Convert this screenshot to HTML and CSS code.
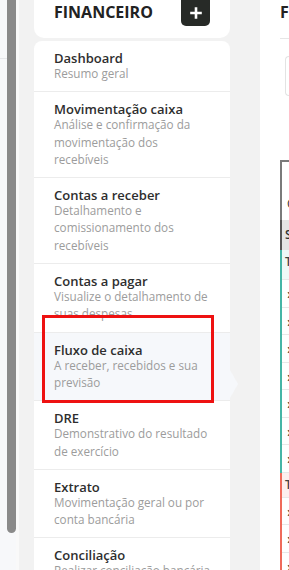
FILE: index.html
```html
<!DOCTYPE html>
<html lang="pt-BR">
<head>
    <meta charset="UTF-8">
    <meta name="viewport" content="width=device-width, initial-scale=1.0">
    <title>Financeiro</title>
    <link rel="stylesheet" href="styles.css">
</head>
<body>
    <div class="page">
        <aside class="rail">
            <div class="rail-line"></div>
        </aside>
        <div class="scroll"><div class="thumb"></div></div>
        <div class="edge"></div>

        <main class="main">
            <!-- menu financeiro -->
            <section class="fin">
                <header class="fin-head">
                    <h2 class="fin-title">FINANCEIRO</h2>
                    <button class="add" type="button">
                        <svg width="12" height="12" viewBox="0 0 12 12">
                            <path d="M6 1.5v9M1.5 6h9" stroke="#fff" stroke-width="2.6" stroke-linecap="square"/>
                        </svg>
                    </button>
                </header>

                <ul class="menu">
                    <li class="item">
                        <div class="item-title">Dashboard</div>
                        <div class="item-desc">Resumo geral</div>
                    </li>
                    <li class="item">
                        <div class="item-title">Movimentação caixa</div>
                        <div class="item-desc">Análise e confirmação da movimentação dos recebíveis</div>
                    </li>
                    <li class="item">
                        <div class="item-title">Contas a receber</div>
                        <div class="item-desc">Detalhamento e comissionamento dos recebíveis</div>
                    </li>
                    <li class="item">
                        <div class="item-title">Contas a pagar</div>
                        <div class="item-desc">Visualize o detalhamento de suas despesas</div>
                    </li>
                    <li class="item active">
                        <div class="item-title">Fluxo de caixa</div>
                        <div class="item-desc">A receber, recebidos e sua previsão</div>
                    </li>
                    <li class="item">
                        <div class="item-title">DRE</div>
                        <div class="item-desc">Demonstrativo do resultado de exercício</div>
                    </li>
                    <li class="item">
                        <div class="item-title">Extrato</div>
                        <div class="item-desc">Movimentação geral ou por conta bancária</div>
                    </li>
                    <li class="item">
                        <div class="item-title">Conciliação</div>
                        <div class="item-desc">Realizar conciliação bancária</div>
                    </li>
                </ul>
            </section>

            <!-- painel fluxo de caixa -->
            <section class="panel">
                <h2 class="panel-title">FLUXO DE CAIXA</h2>
                <div class="filter"></div>

                <div class="grid">
                    <div class="grid-cap">Categoria</div>
                    <div class="grid-head">Saldo</div>
                    <div class="group in">
                        <div class="row sum">Total entradas</div>
                        <div class="row">›</div>
                        <div class="row">›</div>
                        <div class="row">›</div>
                        <div class="row">›</div>
                        <div class="row">›</div>
                        <div class="row">›</div>
                        <div class="row">›</div>
                    </div>
                    <div class="group out">
                        <div class="row sum">Total saídas</div>
                        <div class="row">›</div>
                        <div class="row">›</div>
                        <div class="row">›</div>
                    </div>
                </div>
            </section>
        </main>

        <div class="mark"></div>
    </div>
</body>
</html>
```

FILE: styles.css
```css
/* página */
body {
    margin: 0;
    height: 570px;
    overflow: hidden;
    font-family: 'Open Sans', 'Liberation Sans', sans-serif;
    color: #333;
}

.page {
    display: flex;
    height: 570px;
    position: relative;
}

/* barra lateral à esquerda */
.rail {
    width: 7px;
    background-color: #f7f8fa;
    padding-top: 58px;
    box-sizing: border-box;
}

.rail-line {
    height: 1px;
    background-color: #e6e7ea;
}

.scroll {
    width: 9px;
    background-color: #f7f8fa;
}

.thumb {
    height: 533px;
    background-color: #8a8a8a;
    border-radius: 0 0 5px 5px;
}

.edge {
    width: 3px;
    background-color: #f9f9f9;
}

/* área principal */
.main {
    flex: 1;
    display: flex;
    gap: 30px;
    padding-left: 15px;
    background-color: #f2f2f2;
    min-width: 0;
}

.fin {
    width: 196px;
    flex-shrink: 0;
    display: flex;
    flex-direction: column;
    gap: 3px;
}

.fin-head {
    height: 38px;
    flex-shrink: 0;
    display: flex;
    justify-content: space-between;
    align-items: flex-start;
    padding: 0 20px;
    background-color: #fff;
    border-radius: 0 0 10px 10px;
}

.fin-title {
    margin: 0;
    font-size: 16px;
    font-weight: 700;
    line-height: 24px;
    color: #222;
}

.add {
    width: 29px;
    height: 26px;
    padding: 0;
    border: none;
    border-radius: 0 0 5px 5px;
    background-color: #272a27;
    display: flex;
    align-items: center;
    justify-content: center;
}

/* lista do menu */
.menu {
    list-style: none;
    margin: 0;
    padding: 0;
    background-color: #fff;
    border-radius: 8px 8px 0 0;
    flex: 1;
}

.item {
    position: relative;
    padding: 11px 16px 9px 20px;
    border-bottom: 1px solid #ececec;
}

.item-title {
    font-size: 13px;
    font-weight: 600;
    line-height: 13px;
    color: #2e2e2e;
}

.item-desc {
    font-size: 11.7px;
    line-height: 17.3px;
    color: #9c9c9c;
}

.item.active {
    background-color: #f6f8fb;
}

/* seta do item ativo */
.item.active::after {
    content: "";
    position: absolute;
    right: -8px;
    top: 37px;
    border-left: 8px solid #f6f8fb;
    border-top: 14px solid transparent;
    border-bottom: 14px solid transparent;
}

/* painel da direita */
.panel {
    flex: 1;
    min-width: 0;
    background-color: #fff;
    padding-left: 20px;
    overflow: hidden;
}

.panel-title {
    margin: 0;
    height: 38px;
    font-size: 16px;
    font-weight: 700;
    line-height: 24px;
    color: #222;
    white-space: nowrap;
    border-bottom: 1px solid #e6e6e6;
}

.filter {
    margin: 17px 0 0 5px;
    height: 38px;
    border: 1px solid #e3e3e3;
    border-radius: 10px 0 0 10px;
    border-right: none;
}

.grid {
    margin-top: 64px;
    border-top: 2px solid #7a7a7a;
    font-size: 12px;
    white-space: nowrap;
}

.grid-cap {
    height: 58px;
    line-height: 84px;
    padding-left: 5px;
    border-left: 2px solid #7a7a7a;
    color: #333;
}

.grid-head {
    height: 30px;
    line-height: 30px;
    padding-left: 3px;
    background-color: #e4e4e4;
    border-left: 2px solid #555;
    font-weight: 600;
}

.group.in {
    border-left: 2px solid #45b5a6;
}

.group.out {
    border-left: 2px solid #ef6a5a;
}

.row {
    height: 27.5px;
    line-height: 27px;
    padding-left: 5px;
    border-bottom: 1px solid #e8e8e8;
    box-sizing: border-box;
    font-size: 15px;
    font-weight: 700;
    color: #444;
}

.row.sum {
    height: 30px;
    line-height: 24px;
    padding-left: 3px;
    font-size: 12px;
    font-weight: 600;
}

.in .row.sum {
    background-color: #eef9f7;
}

.out .row.sum {
    background-color: #fdefee;
    height: 25px;
}

/* marcação vermelha sobre o item */
.mark {
    position: absolute;
    left: 42px;
    top: 315px;
    width: 172px;
    height: 88px;
    box-sizing: border-box;
    border: 3px solid #ee1111;
}
```
